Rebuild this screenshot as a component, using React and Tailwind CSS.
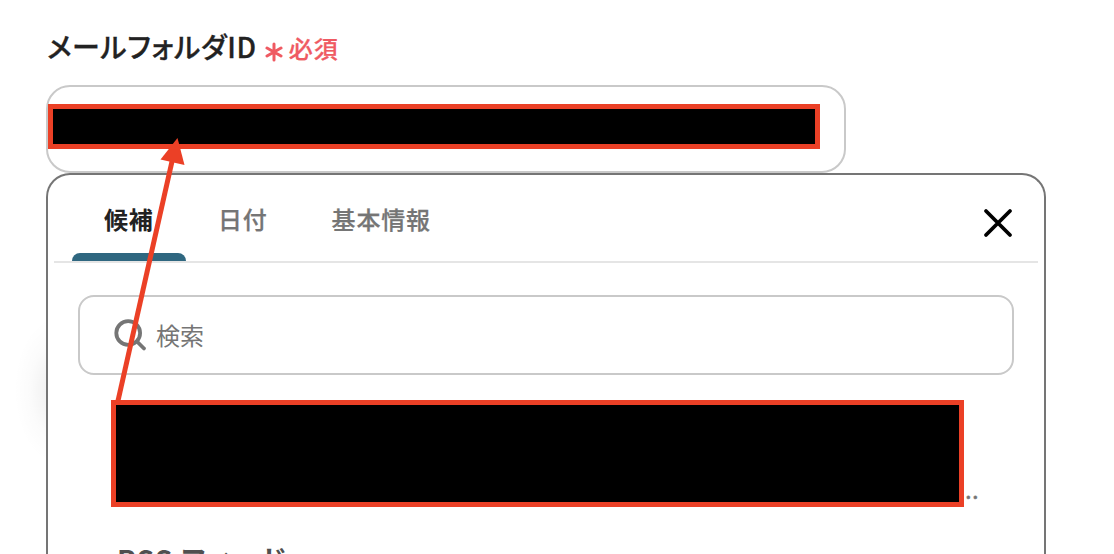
import React from 'react';

const TABS = [
  { label: '候補', active: true },
  { label: '日付', active: false },
  { label: '基本情報', active: false },
];

const App = () => (
  <div className="relative flex h-[554px] w-[1114px] flex-col overflow-hidden bg-white pl-[46px] pt-[26px] font-['Noto_Sans_CJK_JP',sans-serif]">
    {/* Soft shadow behind the panel's left edge */}
    <div className="absolute left-[14px] top-[315px] h-[150px] w-[90px] bg-[radial-gradient(closest-side,rgba(0,0,0,0.08),rgba(0,0,0,0.015)_65%,transparent)]" />

    <FieldLabel />
    <div className="relative mt-[19px] flex h-[88px] w-[800px] shrink-0 items-start rounded-[24px] border-2 border-[#c9c9c9] bg-white">
      <div className="mt-[17px] h-[45px] w-[772px] border-[5px] border-[#eb4026] bg-black" />
    </div>

    <div className="relative flex h-[420px] w-[1000px] shrink-0 flex-col rounded-t-[24px] border-2 border-b-0 border-[#757575] bg-white">
      <TabBar />
      <SearchBox />
      <div className="ml-[63px] mt-[25px] flex shrink-0 items-end">
        <div className="h-[107px] w-[853px] border-[5px] border-[#eb4026] bg-black" />
        <span className="ml-[1px] mb-[6px] text-[24px] leading-[24px] tracking-[0.4px] text-[#757575] [-webkit-text-stroke:0.4px]">..</span>
      </div>
      <p className="ml-[69px] mt-[31px] whitespace-nowrap text-[28px] font-bold leading-[42px] text-[#505050] [font-feature-settings:'palt']">
        <span className="tracking-[1.2px]">RSS </span>
        <span className="tracking-[2.2px]">フィード</span>
      </p>
    </div>

    {/* Arrow from the candidate to the input */}
    <svg className="pointer-events-none absolute left-0 top-0" width="1114" height="554" fill="none">
      <path d="M117.500 403 L173 157" stroke="#eb4026" strokeWidth="5" />
      <path d="M177.500 138 L184.500 165 L160.500 159.500 Z" fill="#eb4026" />
    </svg>
  </div>
);

const FieldLabel = () => (
  <div className="flex h-[40px] shrink-0 items-center whitespace-nowrap pl-px">
    <span className="text-[28px] font-medium leading-[40px] tracking-[0.7px] text-[#222] [-webkit-text-stroke:0.3px] [font-feature-settings:'palt']">メールフォルダID</span>
    <svg className="ml-[8px] mt-[11px]" width="18" height="20" viewBox="0 0 18 20" fill="none" stroke="#ef5a62" strokeWidth="3" strokeLinecap="round">
      <path d="M9 2v16M2 6l14 8M16 6l-14 8" />
    </svg>
    <span className="ml-[6px] mt-[3px] text-[24px] font-medium leading-[40px] tracking-[0.96px] text-[#ef5a62] [-webkit-text-stroke:0.25px]">必須</span>
  </div>
);

const TabBar = () => (
  <div className="mx-[6px] flex h-[88px] shrink-0 items-stretch border-b-2 border-[#e5e5e5] pl-[18px]">
    {TABS.map((tab) => (
      <div key={tab.label} className="flex flex-col justify-between px-[32px] pt-[24px] first:w-[114px]">
        <span className={`whitespace-nowrap text-[24px] leading-[40px] tracking-[0.8px] ${tab.active ? 'font-bold text-[#222]' : 'font-medium text-[#757575] [-webkit-text-stroke:0.25px]'}`}>
          {tab.label}
        </span>
        {tab.active && <div className="-mx-[32px] h-[8px] rounded-t-[8px] bg-[#2f6780]" />}
      </div>
    ))}
    <button className="ml-auto mr-[24px] mt-[32px] h-[32px] w-[32px]" aria-label="閉じる">
      <svg width="32" height="32" viewBox="0 0 32 32" fill="none" stroke="black" strokeWidth="3.800" strokeLinecap="round">
        <path d="M4 4l24 24M28 4L4 28" />
      </svg>
    </button>
  </div>
);

const SearchBox = () => (
  <div className="ml-[30px] mt-[32px] flex h-[80px] w-[936px] shrink-0 items-center rounded-[16px] border-2 border-[#c9c9c9] pl-[34px]">
    <svg width="34" height="34" viewBox="0 0 34 34" fill="none" stroke="#757575" strokeWidth="3.800" strokeLinecap="round">
      <circle cx="14.200" cy="15" r="11.900" />
      <path d="M23 23.500l7 7" />
    </svg>
    <span className="ml-[8px] text-[24px] leading-[36px] text-[#757575]">検索</span>
  </div>
);

export default App;
